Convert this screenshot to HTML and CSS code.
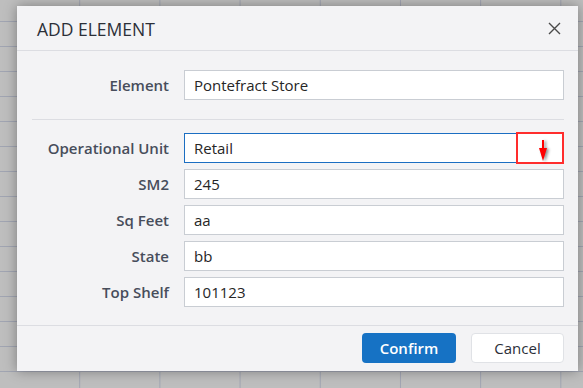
FILE: index.html
```html
<!DOCTYPE html>
<html lang="en">
    <head>
        <meta charset="UTF-8">
        <meta name="viewport" content="width=device-width, initial-scale=1.0">
        <title>Add Element</title>
        <link rel="stylesheet" href="styles.css">
    </head>

    <body>
        <div class="dialog">
            <header class="dialog-header">
                <h2 class="title">ADD ELEMENT</h2>
                <span class="icon-close">
                    <svg width="13" height="13" viewBox="0 0 13 13">
                        <path d="M1 1 L12 12 M12 1 L1 12" stroke="#4a4a4a" stroke-width="1.4" fill="none"/>
                    </svg>
                </span>
            </header>

            <div class="dialog-body">
                <div class="form-grid">
                    <label>Element</label>
                    <input type="text" value="Pontefract Store">
                </div>
                <hr class="divider">
                <div class="form-grid">
                    <label>Operational Unit</label>
                    <div class="select-wrap">
                        <input type="text" class="focused" value="Retail">
                        <!-- annotation drawn over the dropdown -->
                        <div class="mark">
                            <svg width="16" height="28" viewBox="0 0 16 28">
                                <path d="M8 5 V16" stroke="#f00" stroke-width="2"/>
                                <path d="M4 13 H12 L8 26 Z" fill="#f00"/>
                            </svg>
                        </div>
                    </div>
                    <label>SM2</label>
                    <input type="text" value="245">
                    <label>Sq Feet</label>
                    <input type="text" value="aa">
                    <label>State</label>
                    <input type="text" value="bb">
                    <label>Top Shelf</label>
                    <input type="text" value="101123">
                </div>
            </div>

            <footer class="dialog-footer">
                <button class="btn btn-confirm">Confirm</button>
                <button class="btn btn-cancel">Cancel</button>
            </footer>
        </div>
    </body>

</html>
```

FILE: styles.css
```css
* {
    margin: 0;
    padding: 0;
    box-sizing: border-box;
    font-family: 'Open Sans', 'Noto Sans', sans-serif;
}

body {
    width: 583px;
    height: 388px;
    overflow: hidden;
    padding: 6px 0 0 17px;
    background-color: #bebebe;
    background-image:
        linear-gradient(to right, transparent 79px, #a1a5b2 79px, #a1a5b2 81px, transparent 81px),
        linear-gradient(to bottom, transparent 21px, #a1a5b2 21px, #a1a5b2 22px, transparent 22px);
    background-size: 80.2px 100%, 100% 25px;
}

.dialog {
    width: 561px;
    height: 365px;
    background: #f3f3f5;
    box-shadow: 0 0 12px rgba(0, 0, 0, 0.35);

    display: flex;
    flex-direction: column;
}

.dialog-header {
    height: 45px;
    border-bottom: 1px solid #dcdde2;
    padding: 0 17px 0 20px;

    display: flex;
    justify-content: space-between;
    align-items: center;

    .title {
        font-size: 17.5px;
        font-weight: 400;
        color: #2b2f38;
        padding-top: 1px;
    }

    .icon-close {
        display: flex;
        margin-top: 1px;
    }
}

.dialog-body {
    padding: 19px 14px 18px 15px;
    flex: 1;
}

.form-grid {
    display: grid;
    grid-template-columns: 137px 1fr;
    column-gap: 15px;
    row-gap: 6px;
    align-items: center;

    & label {
        text-align: right;
        font-size: 15px;
        font-weight: 600;
        color: #474d5b;
    }

    & input {
        width: 100%;
        height: 30px;
        border: 1px solid #c9cdd3;
        background: white;
        outline: none;
        padding: 0 9px;
        font-size: 15px;
        color: #262626;

        &.focused {
            border-color: #1b6ec2;
        }
    }
}

.divider {
    border: none;
    border-top: 1px solid #dcdde2;
    margin: 19px 0 13px;
}

.select-wrap {
    position: relative;

    .mark {
        position: absolute;
        top: -1px;
        right: 0;
        width: 48px;
        height: 32px;
        border: 2px solid #ff2d2d;

        & svg {
            position: absolute;
            left: 17px;
            top: 1px;
            filter: drop-shadow(2px 1px 1.5px rgba(0, 0, 0, 0.45));
        }
    }
}

.dialog-footer {
    height: 46px;
    border-top: 1px solid #dcdde2;
    padding: 0 14px 1px 0;

    display: flex;
    justify-content: flex-end;
    align-items: center;
    gap: 15px;

    .btn {
        height: 30px;
        border-radius: 4px;
        font-size: 15px;
        cursor: pointer;
    }

    .btn-confirm {
        width: 94px;
        background: #1672c4;
        border: none;
        color: white;
        font-weight: 600;
    }

    .btn-cancel {
        width: 93px;
        background: white;
        border: 1px solid #e0e2e6;
        color: #2b2f38;
    }
}
```
